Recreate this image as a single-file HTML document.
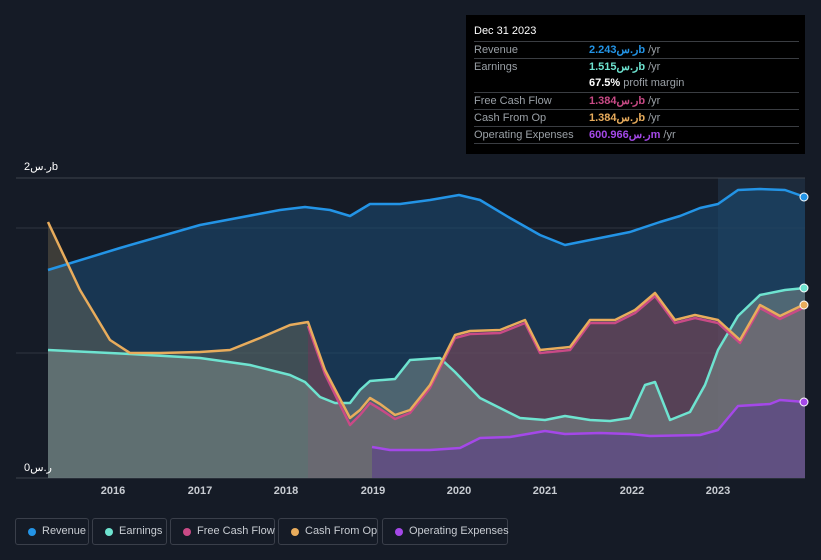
<!DOCTYPE html>
<html><head><meta charset="utf-8"><style>
body{margin:0;background:#151b26;font-family:"Liberation Sans","Noto Sans CJK SC",sans-serif;}
.wrap{position:relative;width:821px;height:560px;overflow:hidden;background:#151b26}
.tt{position:absolute;left:466px;top:15px;width:339px;height:139px;background:#000;color:#ccc;font-size:11px}
.tt .h{position:absolute;left:8px;top:10px;color:#fff;font-size:11px}
.row{position:absolute;left:8px;width:325px;border-top:1px solid #3a3d42;height:17px;line-height:17px}
.row span.l{color:#9aa0a6}
.row span.v{position:absolute;left:115px;font-weight:bold}
.row span.u{color:#9aa0a6;font-weight:normal}
.lg{position:absolute;top:518px;height:27px;border:1px solid #3a3f4a;border-radius:3px;color:#c8ccd2;font-size:11px;line-height:25px;box-sizing:border-box;padding-left:26px;white-space:nowrap}
.lg i{position:absolute;left:12px;top:9px;width:8px;height:8px;border-radius:50%}
.ax{position:absolute;color:#fff;font-size:11px}
.yr{position:absolute;top:485px;color:#c8ccd2;font-size:11px;font-weight:bold;transform:translateX(-50%)}
</style></head><body><div class="wrap">
<svg width="821" height="560" style="position:absolute;left:0;top:0">
<rect x="718" y="178" width="87" height="300" fill="#1d2b3c"/>
<line x1="16" y1="178" x2="805" y2="178" stroke="#3d434c"/>
<line x1="16" y1="228" x2="805" y2="228" stroke="#2e3540"/>
<line x1="16" y1="353" x2="805" y2="353" stroke="#2e3540"/>
<line x1="16" y1="478" x2="805" y2="478" stroke="#3d434c"/>
<path d="M48,270 L120,248 L200,225 L280,210 L305,207 L330,210 L350,216 L370,204 L400,204 L430,200 L459,195 L480,200 L510,218 L540,235 L565,245 L590,240 L630,232 L660,222 L680,216 L700,208 L718,204 L738,190 L760,189 L785,190 L805,197 L805,478 L48,478Z" fill="#1a4a70" fill-opacity="0.6"/>
<path d="M48,222 L80,290 L110,340 L130,353 L160,353 L200,352 L230,350 L260,338 L290,325 L308,322 L308,478 L48,478Z" fill="#8a7a5c" fill-opacity="0.35"/>
<path d="M308,322 L325,372 L350,425 L360,415 L370,402 L380,408 L395,418 L410,412 L430,387 L455,337 L470,333 L500,332 L525,322 L540,352 L570,349 L590,322 L615,322 L635,312 L655,295 L675,322 L695,317 L718,322 L740,342 L760,307 L780,318 L805,306 L805,478 L308,478Z" fill="#8a4a5a" fill-opacity="0.55"/>
<path d="M48,350 L130,354 L200,358 L250,365 L290,375 L305,382 L320,397 L335,403 L350,403 L360,390 L370,381 L395,379 L410,360 L440,358 L455,372 L480,398 L500,408 L520,418 L545,420 L565,416 L590,420 L610,421 L630,418 L645,385 L655,382 L670,420 L690,412 L705,385 L718,350 L738,316 L760,295 L785,290 L805,288 L805,478 L48,478Z" fill="#7a8a88" fill-opacity="0.55"/>
<path d="M372,447 L390,450 L430,450 L460,448 L480,438 L510,437 L545,431 L565,434 L600,433 L630,434 L650,436 L700,435 L718,430 L738,406 L770,404 L780,400 L805,402 L805,478 L372,478Z" fill="#5a3f8a" fill-opacity="0.6"/>
<g fill="none" stroke-width="2.5" stroke-linejoin="round">
<path d="M48,270 L120,248 L200,225 L280,210 L305,207 L330,210 L350,216 L370,204 L400,204 L430,200 L459,195 L480,200 L510,218 L540,235 L565,245 L590,240 L630,232 L660,222 L680,216 L700,208 L718,204 L738,190 L760,189 L785,190 L805,197" stroke="#2394e6"/>
<path d="M48,350 L130,354 L200,358 L250,365 L290,375 L305,382 L320,397 L335,403 L350,403 L360,390 L370,381 L395,379 L410,360 L440,358 L455,372 L480,398 L500,408 L520,418 L545,420 L565,416 L590,420 L610,421 L630,418 L645,385 L655,382 L670,420 L690,412 L705,385 L718,350 L738,316 L760,295 L785,290 L805,288" stroke="#6ee3d0"/>
<path d="M308,326 L325,374 L350,425 L360,415 L370,403 L380,409 L395,419 L410,413 L430,388 L455,338 L470,334 L500,333 L525,323 L540,353 L570,350 L590,323 L615,323 L635,313 L655,296 L675,323 L695,318 L718,323 L740,343 L760,308 L780,319 L805,307" stroke="#c94a86"/>
<path d="M48,222 L80,290 L110,340 L130,353 L160,353 L200,352 L230,350 L260,338 L290,325 L308,322 L325,370 L350,418 L360,410 L370,398 L380,404 L395,415 L410,410 L430,385 L455,335 L470,331 L500,330 L525,320 L540,350 L570,347 L590,320 L615,320 L635,310 L655,293 L675,320 L695,315 L718,320 L740,340 L760,305 L780,316 L805,304" stroke="#e8ac5c"/>
<path d="M372,447 L390,450 L430,450 L460,448 L480,438 L510,437 L545,431 L565,434 L600,433 L630,434 L650,436 L700,435 L718,430 L738,406 L770,404 L780,400 L805,402" stroke="#a448e8"/>
</g>
<circle cx="804" cy="197" r="4" fill="#2394e6" stroke="#fff" stroke-width="1"/>
<circle cx="804" cy="288" r="4" fill="#6ee3d0" stroke="#fff" stroke-width="1"/>
<circle cx="804" cy="305" r="4" fill="#e8ac5c" stroke="#fff" stroke-width="1"/>
<circle cx="804" cy="402" r="4" fill="#a448e8" stroke="#fff" stroke-width="1"/>
</svg>
<div class="ax" style="left:24px;top:160px">2ر.سb</div>
<div class="ax" style="left:24px;top:461px">0ر.س</div>
<div class="yr" style="left:113px">2016</div><div class="yr" style="left:200px">2017</div><div class="yr" style="left:286px">2018</div><div class="yr" style="left:373px">2019</div><div class="yr" style="left:459px">2020</div><div class="yr" style="left:545px">2021</div><div class="yr" style="left:632px">2022</div><div class="yr" style="left:718px">2023</div>
<div class="tt">
<div class="h">Dec 31 2023</div>
<div class="row" style="top:26px"><span class="l">Revenue</span><span class="v" style="color:#2394e6">2.243ر.سb <span class="u">/yr</span></span></div>
<div class="row" style="top:43px"><span class="l">Earnings</span><span class="v" style="color:#6ee3d0">1.515ر.سb <span class="u">/yr</span></span></div>
<div class="row" style="top:60px;border-top:none"><span class="v" style="color:#fff">67.5% <span class="u">profit margin</span></span></div>
<div class="row" style="top:77px"><span class="l">Free Cash Flow</span><span class="v" style="color:#c94a86">1.384ر.سb <span class="u">/yr</span></span></div>
<div class="row" style="top:94px"><span class="l">Cash From Op</span><span class="v" style="color:#e8ac5c">1.384ر.سb <span class="u">/yr</span></span></div>
<div class="row" style="top:111px"><span class="l">Operating Expenses</span><span class="v" style="color:#a448e8">600.966ر.سm <span class="u">/yr</span></span></div>
<div class="row" style="top:128px"></div>
</div>
<div class="lg" style="left:15px;width:74px"><i style="background:#2394e6"></i>Revenue</div>
<div class="lg" style="left:92px;width:75px"><i style="background:#6ee3d0"></i>Earnings</div>
<div class="lg" style="left:170px;width:105px"><i style="background:#c94a86"></i>Free Cash Flow</div>
<div class="lg" style="left:278px;width:100px"><i style="background:#e8ac5c"></i>Cash From Op</div>
<div class="lg" style="left:382px;width:126px"><i style="background:#a448e8"></i>Operating Expenses</div>
</div></body></html>
